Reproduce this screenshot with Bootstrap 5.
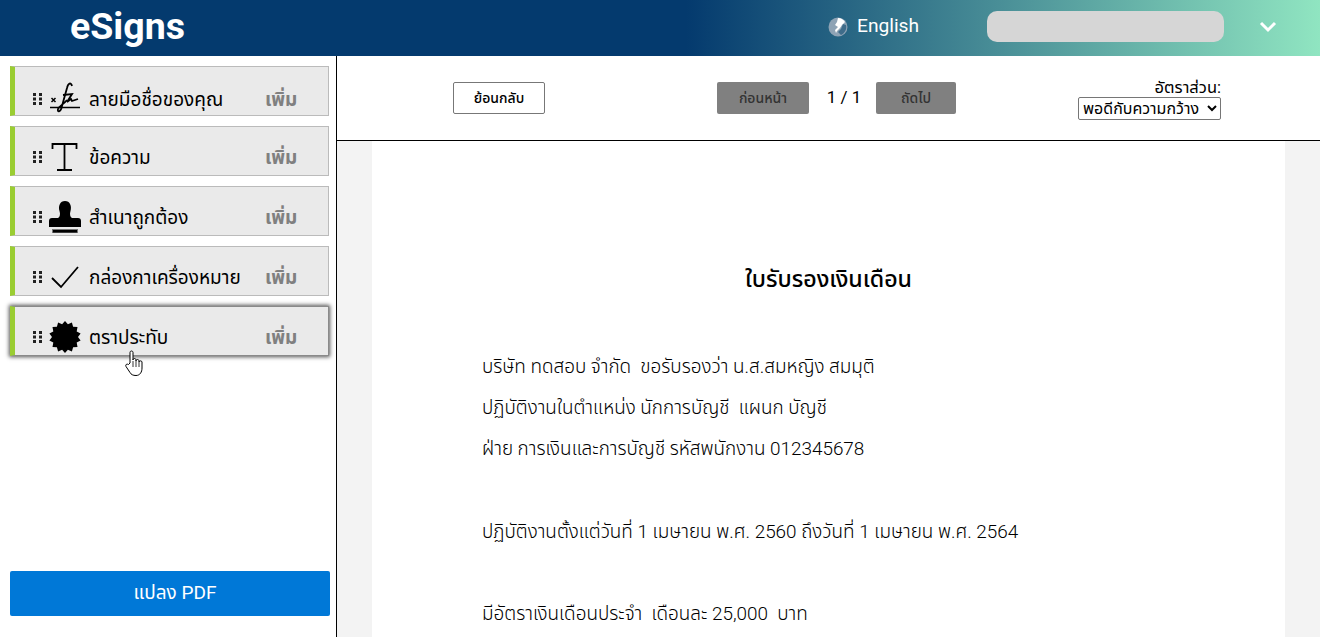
<!DOCTYPE html>
<html lang="th">
<head>
    <meta charset="UTF-8">
    <meta name="viewport" content="width=device-width, initial-scale=1.0">
    <title>eSigns</title>
    <link href="https://cdn.jsdelivr.net/npm/bootstrap@5.3.0/dist/css/bootstrap.min.css" rel="stylesheet">
    <style>
        html, body { height: 637px; overflow: hidden; }
        body { font-family: Roboto, "Noto Sans Thai", "Noto Sans", "Liberation Sans", sans-serif; color: #000; }
        .top-bar { height: 56px; padding-bottom: 3px; background: linear-gradient(90deg, #043a6e 0%, #043a6e 52%, #90e5c1 100%); color: #fff; }
        .brand-name { font-size: 37.5px; font-weight: 700; margin-left: 70px; width: 758px; line-height: 53px; }
        .lang-text { font-size: 19.2px; margin-left: 9px; width: 130px; }
        .user-box { width: 237px; height: 31px; background: #d6d6d6; border-radius: 10px; }
        .chev-wrap { margin-left: 35px; }
        .work-area { height: 581px; }
        .side-panel { width: 337px; border-right: 1px solid #000; padding: 10px 6px 21px 10px; }
        .tool-item { height: 50px; width: 319px; background: #eaeaea; border: 1px solid #bbb; border-left: 5px solid #9acd32; margin-bottom: 10px; padding-top: 12px; }
        .tool-first { padding-top: 16px; }
        .tool-hover { box-shadow: 0 0 4px 1px #555; border-color: #8a8a8a; border-left-color: #9acd32; position: relative; }
        .grip-icon { margin-left: 18px; width: 10px; }
        .tool-icon { width: 32px; height: 32px; margin-left: 6px; flex-shrink: 0; }
        .tool-first .tool-icon { margin-top: -4px; }
        .tool-name { font-size: 19px; margin-left: 8px; width: 176px; padding-top: 2px; }
        .tool-add { font-size: 19px; font-weight: 700; color: #808080; padding-top: 2px; }
        .hand-cursor { position: absolute; left: 110px; top: 43px; }
        .pdf-btn { height: 45px; width: 320px; background: #0078d7; border-radius: 2px; color: #fff; font-size: 19px; font-weight: 400; }
        .pdf-btn:hover { background: #0078d7; color: #fff; }
        .pdf-label { padding-left: 10px; }
        .viewer-bar { height: 85px; border-bottom: 1px solid #000; padding-left: 116px; padding-right: 99px; }
        .btn-back { width: 92px; height: 32px; border: 1px solid #777; border-radius: 2px; font-size: 14px; font-weight: 500; background: #fff; }
        .btn-page { height: 32px; background: #808080; border: 0; border-radius: 2px; font-size: 14px; font-weight: 500; color: #333; flex-shrink: 0; }
        .btn-prev { width: 92px; }
        .btn-next { width: 80px; }
        .page-group { margin-left: 172px; }
        .page-count { font-size: 17px; width: 67px; padding-left: 3px; text-align: center; flex-shrink: 0; }
        .scale-block { padding-top: 3px; }
        .scale-label { font-size: 16.5px; line-height: 18px; }
        .scale-select { font-size: 16px; height: 23px; width: 143px; background: #fff; border: 1px solid #767676; border-radius: 2px; font-family: inherit; }
        .doc-back { background: #f3f3f3; flex: 1; min-height: 0; overflow: hidden; padding: 0 35px; }
        .doc-page { background: #fff; height: 100%; padding-left: 110px; }
        .doc-title { font-size: 23.2px; font-weight: 500; text-align: center; padding-top: 120px; margin: 0 0 49px -110px; line-height: 36px; }
        .doc-line { font-size: 18.9px; font-weight: 300; line-height: 41.2px; height: 41.2px; margin: 0; white-space: pre; }
    </style>
</head>
<body>
    <header class="top-bar d-flex align-items-center">
        <div class="brand-name">eSigns</div>
        <svg width="20" height="20" viewBox="0 0 20 20">
            <circle cx="10" cy="10" r="9.5" fill="#8ea3b5"/>
            <path d="M10 1c3 0 6 2 7 4l-3 3-2 3-3 3-1 2-1-3 3-3-3-2 2-3z" fill="#fff"/>
            <path d="M15 7l3 1c1 4-1 8-5 10l-3-3 3-3z" fill="#3f6c8a"/>
        </svg>
        <div class="lang-text">English</div>
        <div class="user-box"></div>
        <div class="chev-wrap d-flex">
            <svg width="18" height="12" viewBox="0 0 18 12"><path d="M2 2l7 7 7-7" fill="none" stroke="#fff" stroke-width="3"/></svg>
        </div>
    </header>

    <div class="work-area d-flex">
        <aside class="side-panel d-flex flex-column">
            <div class="tool-item tool-first d-flex align-items-center">
                <svg class="grip-icon" height="14" viewBox="0 0 10 14"><path d="M0 1h3v3H0zM6 1h3v3H6zM0 5.500h3v3H0zM6 5.500h3v3H6zM0 10h3v3H0zM6 10h3v3H6z" fill="#222"/></svg>
                <svg class="tool-icon" viewBox="0 0 32 32">
                    <path d="M1 26.500h30" stroke="#000" stroke-width="1.500"/>
                    <path d="M2.500 17l4 4M6.500 17l-4 4" stroke="#000" stroke-width="1.500"/>
                    <path d="M23 5C22 1 19 2 18 7L13 25C12 31 8 32 9 28 10 25 14 24 18 19" fill="none" stroke="#000" stroke-width="1.800"/>
                    <path d="M14 14l9-1-5 8 4-3 1 2 6-2" fill="none" stroke="#000" stroke-width="1.800"/>
                </svg>
                <div class="tool-name">ลายมือชื่อของคุณ</div>
                <div class="tool-add">เพิ่ม</div>
            </div>
            <div class="tool-item d-flex align-items-center">
                <svg class="grip-icon" height="14" viewBox="0 0 10 14"><path d="M0 1h3v3H0zM6 1h3v3H6zM0 5.500h3v3H0zM6 5.500h3v3H6zM0 10h3v3H0zM6 10h3v3H6z" fill="#222"/></svg>
                <svg class="tool-icon" viewBox="0 0 32 32">
                    <path d="M3.500 8V3h24v5M15.500 3v26M8 29h15" fill="none" stroke="#000" stroke-width="1.800"/>
                </svg>
                <div class="tool-name">ข้อความ</div>
                <div class="tool-add">เพิ่ม</div>
            </div>
            <div class="tool-item d-flex align-items-center">
                <svg class="grip-icon" height="14" viewBox="0 0 10 14"><path d="M0 1h3v3H0zM6 1h3v3H6zM0 5.500h3v3H0zM6 5.500h3v3H6zM0 10h3v3H0zM6 10h3v3H6z" fill="#222"/></svg>
                <svg class="tool-icon" viewBox="0 0 32 32">
                    <path d="M10.500 10C9 5 11 0 16 0s7 5 5.500 10c-1 3-.5 6 1.500 7h6c2 0 3 1 3 3v6H0v-6c0-2 1-3 3-3h6c2-1 2.500-4 1.500-7z" fill="#000"/>
                    <rect x="3.500" y="28.500" width="25" height="3.500" fill="#000" stroke="#777" stroke-width="1"/>
                </svg>
                <div class="tool-name">สำเนาถูกต้อง</div>
                <div class="tool-add">เพิ่ม</div>
            </div>
            <div class="tool-item d-flex align-items-center">
                <svg class="grip-icon" height="14" viewBox="0 0 10 14"><path d="M0 1h3v3H0zM6 1h3v3H6zM0 5.500h3v3H0zM6 5.500h3v3H6zM0 10h3v3H0zM6 10h3v3H6z" fill="#222"/></svg>
                <svg class="tool-icon" viewBox="0 0 32 32">
                    <path d="M3 17l9 9L29 6" fill="none" stroke="#000" stroke-width="1.800"/>
                </svg>
                <div class="tool-name">กล่องกาเครื่องหมาย</div>
                <div class="tool-add">เพิ่ม</div>
            </div>
            <div class="tool-item tool-hover d-flex align-items-center">
                <svg class="grip-icon" height="14" viewBox="0 0 10 14"><path d="M0 1h3v3H0zM6 1h3v3H6zM0 5.500h3v3H0zM6 5.500h3v3H6zM0 10h3v3H0zM6 10h3v3H6z" fill="#222"/></svg>
                <svg class="tool-icon" viewBox="0 0 32 32">
                    <polygon id="seal-shape" fill="#000"/>
                </svg>
                <div class="tool-name">ตราประทับ</div>
                <div class="tool-add">เพิ่ม</div>
                <svg class="hand-cursor" width="18" height="26" viewBox="0 0 18 26">
                    <path d="M5 13V2.500C5 .5 8 .5 8 2.500V10c0-2 3-2 3 0v1c0-2 3-2 3 0v1c0-1.500 3-1.500 3 0v6c0 4-2 7.500-6 7.500-3 0-5-1-6-3l-4-6c-1-2 1-3 2.500-2z" fill="#fff" stroke="#000" stroke-width="1"/>
                    <path d="M8 11v6M11 11v6M14 12v5" stroke="#000" stroke-width=".8"/>
                </svg>
            </div>
            <button class="pdf-btn btn mt-auto p-0"><span class="pdf-label">แปลง PDF</span></button>
        </aside>

        <main class="flex-grow-1 d-flex flex-column">
            <div class="viewer-bar d-flex align-items-center">
                <button class="btn-back p-0">ย้อนกลับ</button>
                <div class="page-group d-flex align-items-center">
                    <button class="btn-page btn-prev p-0">ก่อนหน้า</button>
                    <div class="page-count">1 / 1</div>
                    <button class="btn-page btn-next p-0">ถัดไป</button>
                </div>
                <div class="scale-block ms-auto text-end">
                    <div class="scale-label">อัตราส่วน:</div>
                    <select class="scale-select"><option>พอดีกับความกว้าง</option></select>
                </div>
            </div>
            <div class="doc-back">
                <div class="doc-page">
                    <h1 class="doc-title">ใบรับรองเงินเดือน</h1>
                    <p class="doc-line">บริษัท ทดสอบ จำกัด  ขอรับรองว่า น.ส.สมหญิง สมมุติ</p>
                    <p class="doc-line">ปฏิบัติงานในตำแหน่ง นักการบัญชี  แผนก บัญชี</p>
                    <p class="doc-line">ฝ่าย การเงินและการบัญชี รหัสพนักงาน 012345678</p>
                    <p class="doc-line"> </p>
                    <p class="doc-line">ปฏิบัติงานตั้งแต่วันที่ 1 เมษายน พ.ศ. 2560 ถึงวันที่ 1 เมษายน พ.ศ. 2564</p>
                    <p class="doc-line"> </p>
                    <p class="doc-line">มีอัตราเงินเดือนประจำ  เดือนละ 25,000  บาท</p>
                </div>
            </div>
        </main>
    </div>

    <script>
        // 14 point seal for the stamp tool
        const points = [];
        for (let i = 0; i < 28; i++) {
            const r = i % 2 === 0 ? 16 : 13;
            const a = Math.PI * i / 14;
            points.push((16 + r * Math.sin(a)).toFixed(1) + "," + (16 - r * Math.cos(a)).toFixed(1));
        }
        document.getElementById("seal-shape").setAttribute("points", points.join(" "));
    </script>
</body>
</html>
